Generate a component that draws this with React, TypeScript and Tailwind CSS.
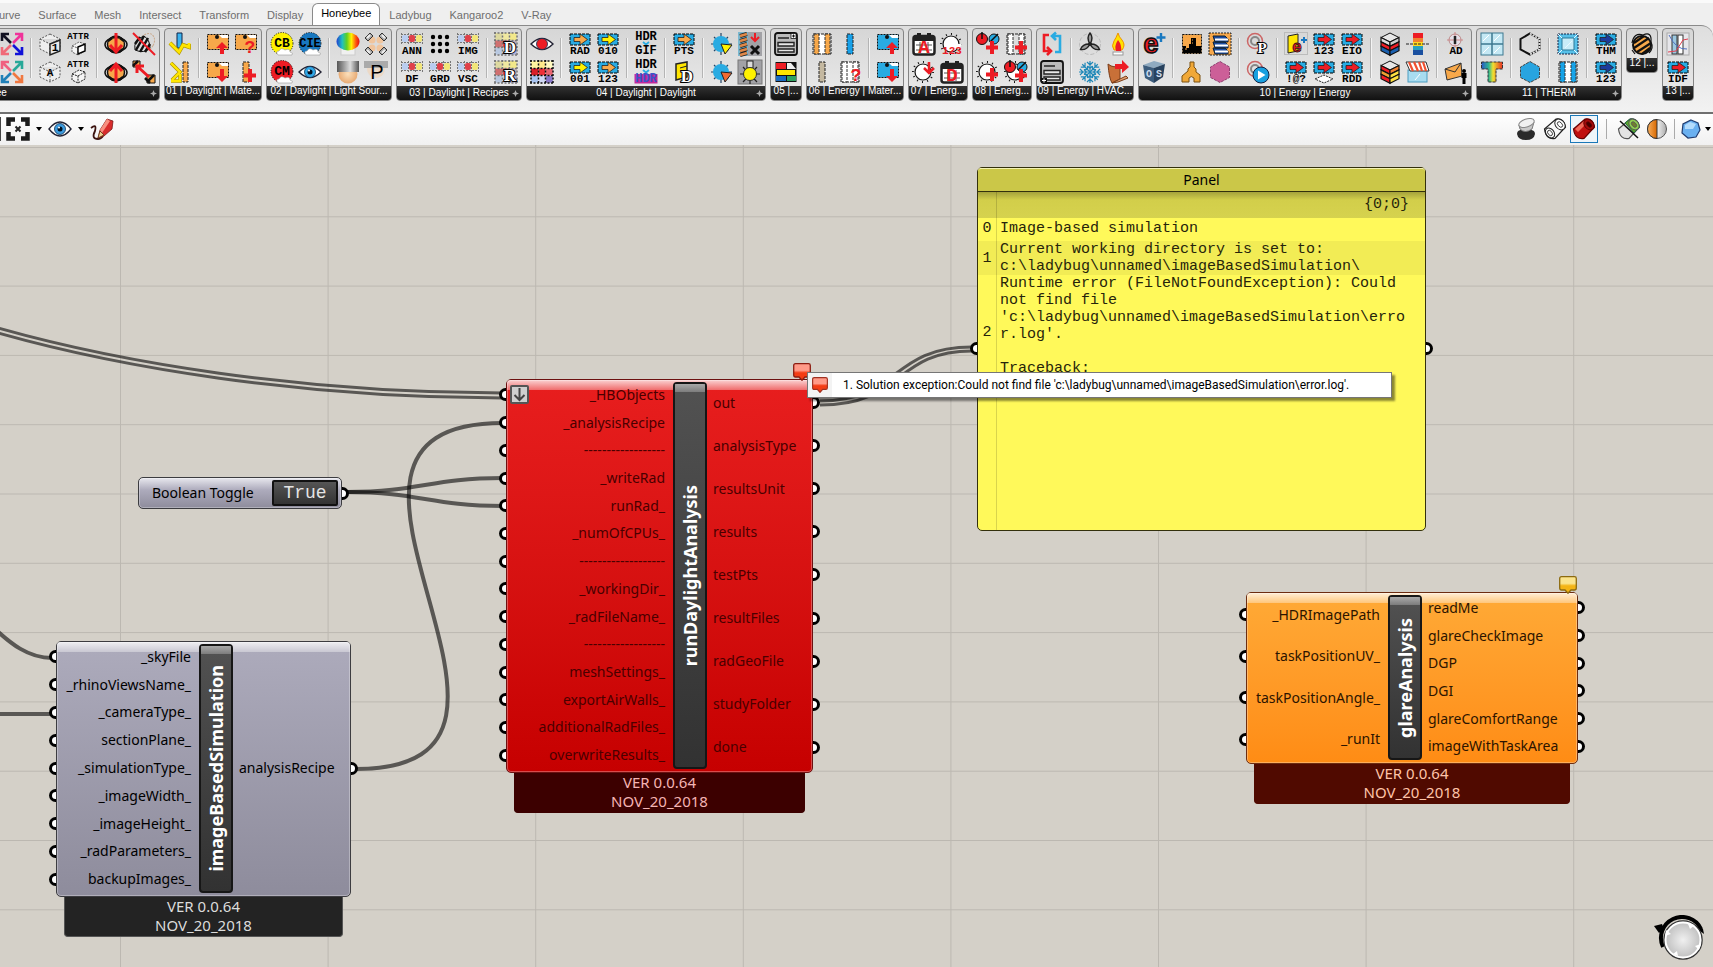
import type { ReactNode } from "react";

/* ---------- small drawing helpers for the ribbon icons ---------- */

function Svg({ children, box = "0 0 24 24", className = "w-6 h-6" }: { children: ReactNode; box?: string; className?: string }) {
  return (
    <svg viewBox={box} className={`${className} shrink-0 overflow-visible`} aria-hidden="true">
      {children}
    </svg>
  );
}

interface CapProps {
  children: ReactNode;
  x?: number;
  y?: number;
  size?: number;
  fill?: string;
}

function Cap({ children, x = 12, y = 22, size = 11, fill = "#000" }: CapProps) {
  return (
    <text x={x} y={y} fontSize={size} fill={fill} fontWeight="bold" textAnchor="middle" fontFamily="'Liberation Mono', monospace">
      {children}
    </text>
  );
}

const BLUE = "#29abe2";
const ORANGE = "#f7a84a";
const RED = "#ed1c24";

function Tag({ arrow, label }: { arrow: string; label?: string }) {
  return (
    <Svg>
      <rect x="2" y="2" width="20" height="11" fill={BLUE} stroke="#000" strokeWidth="1" strokeDasharray="3 1" />
      <path d="M6 5.500H12V2L19.500 7.500L12 13V9.500H6Z" fill={arrow} stroke="#222" strokeWidth="0.800" />
      {label ? <Cap>{label}</Cap> : <path d="M3 19L12 15L21 19L12 23Z" fill="#fff" stroke="#222" strokeDasharray="2 1" />}
    </Svg>
  );
}

function Folder({ fill, mark }: { fill: string; mark: "up" | "down" | "?" }) {
  return (
    <Svg>
      <rect x="1.500" y="2.500" width="21" height="15" fill={fill} stroke="#111" strokeDasharray="2 1" />
      <path d="M13 3H22V6H16Z" fill="#fff" />
      <circle cx="11" cy="5" r="2" fill="#111" />
      {mark === "up" && <path d="M16 10L22 16H18V22H14V16H10Z" fill={RED} />}
      {mark === "down" && <path d="M16 22L22 16H18V9H14V16H10Z" fill={RED} />}
      {mark === "?" && <Cap x={16} y={21} size={18} fill={RED}>?</Cap>}
    </Svg>
  );
}

const dotRow = ["#b9cdf0", "#e0404a", "#f2e678"];

function Grid3({ label }: { label: string }) {
  return (
    <Svg>
      {dotRow.map((c, i) => (
        <rect key={c} x={2 + i * 7} y="3" width="6" height="7" rx="2" fill={c} />
      ))}
      <path d="M1 2.500H23M1 10.500H23M1.500 1V12M8.500 1V12M15.500 1V12M22.500 1V12" stroke="#777" strokeDasharray="2 1" />
      <Cap>{label}</Cap>
    </Svg>
  );
}

function Mosaic({ letter }: { letter?: string }) {
  const colors = letter
    ? ["#ddd9a0", "#f0e8a0", "#f2e88a", "#d07070", "#e04848", "#c8b0b8", "#b8c8e0", "#ccd8ee", "#b0b0d8"]
    : ["#fff4a0", "#ffe98c", "#fff9c0", "#d81e28", "#f03038", "#e86470", "#a8c4f0", "#d0d8f4", "#8878c8"];
  return (
    <Svg>
      {colors.map((c, i) => (
        <rect key={i} x={1 + (i % 3) * 7.4} y={1 + Math.floor(i / 3) * 7.4} width="7" height="7" fill={c} />
      ))}
      <path
        d="M0 1H24M0 8.500H24M0 15.500H24M0 23H24M1 0V24M8.500 0V24M15.500 0V24M23 0V24"
        stroke={letter ? "#777" : "#111"}
        strokeWidth="1.500"
        strokeDasharray="2 1.500"
      />
      {letter && (
        <text x="16" y="21" fontSize="17" textAnchor="middle" fontFamily="'Liberation Serif', serif" fontWeight="bold" fill="#fff" stroke="#000" strokeWidth="2" paintOrder="stroke">
          {letter}
        </text>
      )}
    </Svg>
  );
}

function Plus({ x = 11, y = 11 }: { x?: number; y?: number }) {
  return <path d={`M${x + 4} ${y}h4v4.500h4v4h-4v4.500h-4v-4.500h-4v-4h4z`} fill={RED} />;
}

function Dial() {
  return (
    <>
      <circle cx="11" cy="12" r="10" fill="none" stroke="#111" strokeWidth="2" strokeDasharray="1 4.200" />
      <circle cx="11" cy="12" r="8" fill="#fff" stroke="#111" strokeWidth="1.200" />
    </>
  );
}

function DialIcon({ children }: { children?: ReactNode }) {
  return (
    <Svg>
      <Dial />
      {children}
    </Svg>
  );
}

function Calendar({ letter }: { letter: string }) {
  return (
    <Svg>
      <rect x="1.500" y="4" width="21" height="18.500" rx="2.500" fill="#fff" stroke="#222" strokeWidth="2.500" />
      <path d="M2 7H22M7 1V5M17 1V5" stroke="#222" strokeWidth="4" />
      <path d="M4 13H20M4 18H20M8 10V21M16 10V21" stroke="#555" />
      <Cap y={21} size={19} fill={RED}>{letter}</Cap>
    </Svg>
  );
}

function Knobs() {
  return (
    <>
      <circle cx="6" cy="7" r="5.500" fill={RED} stroke="#111" />
      <circle cx="18" cy="7" r="5" fill={BLUE} stroke="#111" />
      <path d="M6 0V7M14 10L22 2" stroke="#111" strokeWidth="1.500" />
    </>
  );
}

function Cross({ tl, tr, br, bl }: { tl: string; tr: string; br: string; bl: string }) {
  const arrow = "M11 11L3 3M2 9V2H9";
  return (
    <Svg>
      {[tl, tr, br, bl].map((c, i) => (
        <path key={i} d={arrow} fill="none" stroke={c} strokeWidth="2.600" transform={`rotate(${i * 90} 12 12)`} />
      ))}
    </Svg>
  );
}

function Cube({ letter }: { letter: string }) {
  return (
    <Svg>
      <path d="M12 2L22 7V17L12 22L2 17V7ZM2 7L12 12L22 7M12 12V22" fill="#eee" stroke="#555" strokeDasharray="2 1.500" />
      {letter === "1" && <path d="M12 12L22 8V19L12 23Z" fill="#e8e8e8" stroke="#222" strokeWidth="1.400" />}
      <Cap x={letter === "1" ? 17 : 12} y={letter === "1" ? 19 : 16}>{letter}</Cap>
    </Svg>
  );
}

function Attr({ dashed }: { dashed?: boolean }) {
  return (
    <Svg>
      <Cap y={7} size={9}>ATTR</Cap>
      <path
        d="M6 14L13 10L19 12V19L12 23L6 20ZM6 14L12 16V23M12 16L19 12"
        fill="#f4f4f4"
        stroke={dashed ? "#222" : "#666"}
        strokeDasharray="2 1"
      />
      {!dashed && <path d="M12 15L19 12V19L12 22Z" fill="#fff" stroke="#000" strokeWidth="1.400" />}
    </Svg>
  );
}

function Hive({ up }: { up?: boolean }) {
  return (
    <Svg>
      <circle cx="12" cy="12.500" r="8.500" fill={ORANGE} stroke="#111" strokeWidth="1.500" />
      <ellipse cx="12" cy="12.500" rx="11" ry="7" fill="none" stroke="#111" strokeWidth="1.500" />
      <path d="M4 9L8 6M5 17L9 20M20 9L16 6M19 17L15 20" stroke="#111" strokeWidth="2.500" />
      <path d={up ? "M12 23V5M6 11L12 4L18 11" : "M12 1V19M6 13L12 20L18 13"} fill="none" stroke={RED} strokeWidth="3" />
    </Svg>
  );
}

function Disc({ fill, text }: { fill: string; text: string }) {
  return (
    <Svg>
      <circle cx="12" cy="11.500" r="11" fill={fill} stroke="#111" strokeDasharray="1 1.500" />
      <Cap y={15} size={text.length > 2 ? 12 : 13}>{text}</Cap>
      <path d="M8 23Q5 19 9 19Q11 15 15 18Q20 16 20 20Q24 21 22 23Z" fill="#fff" stroke="#999" strokeWidth="0.600" />
    </Svg>
  );
}

function Eye({ iris, wide }: { iris: string; wide?: boolean }) {
  return (
    <Svg>
      <path d={wide ? "M1 12Q12 -2 23 12Q12 26 1 12Z" : "M1 12Q12 1 23 12Q12 23 1 12Z"} fill="#fff" stroke="#223" strokeWidth="1.400" />
      <circle cx="12" cy="12" r="5.500" fill={iris} stroke="#135" strokeWidth="0.800" />
      {iris !== RED && <circle cx="12" cy="12" r="2.500" fill="#012" />}
      {iris !== RED && <circle cx="11" cy="10.500" r="1" fill="#fff" />}
    </Svg>
  );
}

function Hdr({ alt }: { alt?: boolean }) {
  return (
    <Svg>
      <Cap y={8} size={12}>HDR</Cap>
      <path d="M9 10L12 12.500L15 10" fill="none" stroke={BLUE} strokeWidth="1.800" />
      {alt && <rect x="0.500" y="14" width="23" height="9.500" fill="#c0289c" />}
      <Cap y={22} size={12} fill={alt ? "#3a56c8" : "#000"}>{alt ? "HDR" : "GIF"}</Cap>
    </Svg>
  );
}

function Sensor({ fill }: { fill: string }) {
  return (
    <Svg>
      <path d="M11 1V23M1 12H22M4 5L18 19M18 5L4 19" stroke="#246" strokeWidth="1.200" />
      <circle cx="11" cy="12" r="8" fill={BLUE} />
      <path d="M11 12L22 13L15 22Z" fill={fill} stroke="#222" />
    </Svg>
  );
}

function List({ flip }: { flip?: boolean }) {
  return (
    <Svg>
      <rect x="1" y="1" width="22" height="22" rx="2.500" fill="#bbb" stroke="#111" strokeWidth="1.800" />
      <path d="M4 6H15M4 10.500H20V14H4ZM4 17H20V20H4Z" fill="#e8e8e8" stroke="#222" strokeWidth="1.400" />
      {flip ? (
        <>
          <rect x="1" y="18" width="6" height="5" fill="#111" />
          <path d="M4 18.500V22.500M2 20.500H6" stroke="#fff" />
        </>
      ) : (
        <>
          <rect x="17" y="1.500" width="5" height="5" fill="#fff" stroke="#111" strokeWidth="0.800" />
          <path d="M19.500 2.500V5.500M18 4H21" stroke="#111" />
        </>
      )}
    </Svg>
  );
}

function Wall({ fill, mid, mark }: { fill: string; mid: string; mark?: ReactNode }) {
  return (
    <Svg>
      <rect x="3" y="2" width="18" height="20" fill={mid} stroke="#222" strokeDasharray="3 1" />
      <path d="M4 2H9V22H4ZM15 2H20V22H15Z" fill={fill} stroke="#333" strokeDasharray="3 1" />
      {mark}
    </Svg>
  );
}

function Slab({ fill, mark }: { fill: string; mark?: ReactNode }) {
  return (
    <Svg>
      <rect x="9" y="2" width="6" height="20" fill={fill} stroke="#222" strokeDasharray="3 1" />
      {mark}
    </Svg>
  );
}

function Box({ tiers }: { tiers: [string, string][] }) {
  return (
    <Svg>
      <path d="M12 1L21 5.500L12 10L3 5.500Z" fill="#e8e8e8" stroke="#111" />
      {tiers.map(([left, right], i) => (
        <g key={i} stroke="#111" strokeWidth="1.200">
          <path d={`M3 ${5.5 + i * 4.4}L12 ${10 + i * 4.4}v4.400L3 ${9.9 + i * 4.4}Z`} fill={left} />
          <path d={`M21 ${5.5 + i * 4.4}L12 ${10 + i * 4.4}v4.400L21 ${9.9 + i * 4.4}Z`} fill={right} />
        </g>
      ))}
    </Svg>
  );
}

function Rings({ children }: { children: ReactNode }) {
  return (
    <Svg>
      <circle cx="9" cy="9" r="7.500" fill="none" stroke="#c66" strokeWidth="1.500" />
      <circle cx="9" cy="9" r="4" fill="none" stroke="#888" strokeWidth="2" />
      {children}
    </Svg>
  );
}

function Hexagon({ fill, stroke = "#444", width = 1 }: { fill: string; stroke?: string; width?: number }) {
  return (
    <Svg>
      <path d="M12 1.500L21.500 7V17.500L12 22.500L2.500 17.500V7Z" fill={fill} stroke={stroke} strokeWidth={width} strokeDasharray={width > 1 ? "none" : "3 1"} />
      {width > 1 && <path d="M12 1.500L21.500 7V17.500L12 22.500" fill="none" stroke="#ddd" strokeWidth="2" strokeDasharray="2 1" />}
    </Svg>
  );
}

/* ---------- ribbon data: section > column > [top, bottom] ---------- */

interface Group {
  label: string;
  cramped?: boolean;
  more?: boolean;
  sections: ReactNode[][][];
}

const groups: Group[] = [
  {
    label: "Honeybee",
    more: true,
    sections: [
      [[<Cross tl="#112" tr="#f0329a" br="#1010d8" bl="#f06a78" />, <Cross tl="#f06080" tr="#28a898" br="#f07840" bl="#2080b8" />]],
      [
        [<Cube letter="1" />, <Cube letter="A" />],
        [<Attr />, <Attr dashed />],
      ],
      [
        [<Hive />, <Hive up />],
        [
          <Svg>
            <ellipse cx="15" cy="10" rx="7" ry="9" fill="none" stroke="#c9a98c" strokeDasharray="2 1" transform="rotate(30 15 10)" />
            <path d="M3 18Q1 8 12 4Q18 8 18 16Q12 22 3 18Z" fill="#ddd" stroke="#111" />
            <path d="M4 18L12 4M8 20L16 6M13 20L18 12M3 12L8 5" stroke="#111" strokeWidth="2.500" />
            <path d="M1 1L23 23" stroke={RED} strokeWidth="2" />
          </Svg>,
          <Svg>
            <path d="M1 1H8V7H1ZM15 15H23V23H15Z" fill={ORANGE} stroke="#111" />
            <path d="M1 6L6 1M15 22L22 15M13 18L18 23" stroke="#111" strokeWidth="2.500" />
            <path d="M17 17L6 7M5 13V6H12" fill="none" stroke={RED} strokeWidth="3" />
          </Svg>,
        ],
      ],
    ],
  },
  {
    label: "01 | Daylight | Mate...",
    cramped: true,
    sections: [
      [
        [
          <Svg>
            <path d="M9 1H14V16H9Z" fill="#3cb4f0" stroke="#124" />
            <path d="M2 11L11 20L15 13L21 15V12" fill="none" stroke="#aa9000" strokeWidth="4" />
            <path d="M2 11L11 20L15 13L21 15V11" fill="none" stroke="#ffe600" strokeWidth="2.800" />
          </Svg>,
          <Svg>
            <path d="M15 2H20V22H15Z" fill={ORANGE} stroke="#222" strokeDasharray="3 1" />
            <path d="M3 3L12 12L4 20M3 21H12V14" fill="none" stroke="#aa9000" strokeWidth="3.600" />
            <path d="M3 3L12 12L4 20M3 21H12V14" fill="none" stroke="#ffe600" strokeWidth="2.400" />
          </Svg>,
        ],
      ],
      [
        [<Folder fill={ORANGE} mark="up" />, <Folder fill={ORANGE} mark="down" />],
        [<Folder fill={ORANGE} mark="?" />, <Slab fill={ORANGE} mark={<Plus x={10} y={9} />} />],
      ],
    ],
  },
  {
    label: "02 | Daylight | Light Sour...",
    cramped: true,
    sections: [
      [
        [<Disc fill="#fff200" text="CB" />, <Disc fill={RED} text="CM" />],
        [<Disc fill="#1878c0" text="CIE" />, <Eye iris="#30a8e8" />],
      ],
      [
        [
          <Svg>
            <defs>
              <linearGradient id="spectrum">
                <stop offset="0" stopColor="#2040d0" />
                <stop offset="0.250" stopColor="#20c0c0" />
                <stop offset="0.450" stopColor="#60d020" />
                <stop offset="0.650" stopColor="#fff000" />
                <stop offset="0.850" stopColor="#ff5010" />
                <stop offset="1" stopColor="#e01010" />
              </linearGradient>
            </defs>
            <rect x="5" y="15" width="14" height="8" fill="#f0f0f0" stroke="#ccc" />
            <ellipse cx="12" cy="9.500" rx="11.500" ry="9" fill="url(#spectrum)" />
          </Svg>,
          <Svg>
            <defs>
              <radialGradient id="globe">
                <stop offset="0" stopColor="#fbe0bc" />
                <stop offset="1" stopColor="#e8ab74" />
              </radialGradient>
              <linearGradient id="socket">
                <stop offset="0" stopColor="#555" />
                <stop offset="0.600" stopColor="#ddd" />
                <stop offset="1" stopColor="#555" />
              </linearGradient>
            </defs>
            <circle cx="12" cy="14" r="9.500" fill="url(#globe)" />
            <rect x="1" y="1" width="22" height="11" fill="url(#socket)" />
          </Svg>,
        ],
        [
          <Svg>
            {[0, 90, 180, 270].map((a) => (
              <g key={a} transform={`rotate(${a} 12 12)`}>
                <circle cx="8" cy="8" r="3.500" fill="#f0c49c" />
                <path d="M1 6L6 1L9 4L4 9Z" fill="#aaa" stroke="#333" />
                <path d="M3 6L6 3" stroke="#eee" strokeWidth="2" />
              </g>
            ))}
          </Svg>,
          <Svg>
            <circle cx="12" cy="9" r="9" fill="#ecd9c6" />
            <rect x="0" y="1" width="24" height="7" fill="#aaa" />
            <text x="13" y="19" fontSize="20" textAnchor="middle" fontFamily="'Liberation Sans', sans-serif">P</text>
          </Svg>,
        ],
      ],
    ],
  },
  {
    label: "03 | Daylight | Recipes",
    more: true,
    sections: [
      [
        [<Grid3 label="ANN" />, <Grid3 label="DF" />],
        [
          <Svg>
            {[0, 1, 2, 3, 4, 5, 6, 7, 8].map((i) => (
              <circle key={i} cx={5 + (i % 3) * 7} cy={5 + Math.floor(i / 3) * 7} r="2.200" />
            ))}
          </Svg>,
          <Grid3 label="GRD" />,
        ],
        [<Grid3 label="IMG" />, <Grid3 label="VSC" />],
      ],
      [[<Mosaic letter="D" />, <Mosaic letter="R" />]],
    ],
  },
  {
    label: "04 | Daylight | Daylight",
    more: true,
    sections: [
      [[<Eye iris={RED} />, <Mosaic />]],
      [
        [<Tag arrow={ORANGE} label="RAD" />, <Tag arrow="#fff200" label="001" />],
        [<Tag arrow="#fff200" label="010" />, <Tag arrow={ORANGE} label="123" />],
      ],
      [[<Hdr />, <Hdr alt />]],
      [
        [
          <Tag arrow={ORANGE} label="PTS" />,
          <Svg>
            <path d="M4 4L15 2V17L4 20Z" fill="#ffe600" stroke="#222" strokeWidth="1.500" />
            <path d="M8 8L15 6" stroke="#222" />
            <text x="15" y="22" fontSize="17" textAnchor="middle" fontFamily="'Liberation Serif', serif" fontWeight="bold" fill="#fff" stroke="#000" strokeWidth="2" paintOrder="stroke">D</text>
          </Svg>,
        ],
      ],
      [
        [<Sensor fill="#fff200" />, <Sensor fill="#f26a30" />],
        [
          <Svg>
            <rect width="24" height="24" fill="#a2a2a6" />
            <rect width="10" height="24" fill="#7ab8d0" />
            <path d="M2 4L9 2M2 9L9 7M2 14L9 12M2 19L9 17M2 23L9 21" stroke="#222" strokeWidth="4" />
            <path d="M2 4L9 2M2 9L9 7M2 14L9 12M2 19L9 17M2 23L9 21" stroke="#e08848" strokeWidth="2.400" />
            <path d="M17 1V9M13 5L17 9L21 5" fill="none" stroke={RED} strokeWidth="2" />
            <path d="M13 14L21 22M21 14L13 22" stroke="#111" strokeWidth="3" />
          </Svg>,
          <Svg>
            <rect width="24" height="24" fill="#a2a2a6" stroke="#777" />
            <path d="M12 4V24M2 14H22M5 7L19 22M19 7L5 22" stroke="#222" strokeWidth="1.200" />
            <rect x="9" y="1" width="6" height="7" fill="#ddd" stroke="#222" />
            <circle cx="12" cy="14" r="6.500" fill="#fff200" stroke="#333" />
          </Svg>,
        ],
      ],
    ],
  },
  {
    label: "05 |...",
    cramped: true,
    sections: [
      [
        [
          <List />,
          <Svg>
            <rect x="1.500" y="2" width="21" height="20" fill="#111" />
            <path d="M2 3H12V9H2Z" fill={RED} />
            <path d="M13 3H17L22 9H13Z" fill="#eee" />
            <rect x="3" y="10" width="18" height="5" fill="#ffe600" />
            <rect x="2" y="16" width="10" height="5" fill="#1a6ac0" />
            <rect x="13" y="16" width="9" height="5" fill="#2fa060" />
          </Svg>,
        ],
      ],
    ],
  },
  {
    label: "06 | Energy | Mater...",
    cramped: true,
    sections: [
      [
        [<Wall fill={ORANGE} mid="#fff" />, <Slab fill="#c4b8a0" />],
        [<Slab fill="#18a0e8" />, <Wall fill="#fff" mid="#fff" mark={<Cap x={18} y={21} size={18} fill={RED}>?</Cap>} />],
      ],
      [[<Folder fill={BLUE} mark="up" />, <Folder fill={BLUE} mark="down" />]],
    ],
  },
  {
    label: "07 | Energ...",
    cramped: true,
    sections: [
      [
        [
          <Calendar letter="A" />,
          <DialIcon>
            <path d="M17 2V12M12 8L17 13L22 8" fill="none" stroke={RED} strokeWidth="2.500" />
          </DialIcon>,
        ],
        [
          <DialIcon>
            <path d="M11 12H22L19 17H14Z" fill="#fff" />
            <Cap y={22} size={11} fill={RED}>123</Cap>
          </DialIcon>,
          <Calendar letter="D" />,
        ],
      ],
    ],
  },
  {
    label: "08 | Energ...",
    cramped: true,
    sections: [
      [
        [<Svg><Knobs /><Plus x={10} y={9} /></Svg>, <DialIcon><Plus x={10} y={8} /></DialIcon>],
        [<Wall fill="#fff" mid="#ddd" mark={<Plus x={11} y={9} />} />, <Svg><Dial /><Knobs /><Plus x={11} y={9} /></Svg>],
      ],
    ],
  },
  {
    label: "09 | Energy | HVAC...",
    cramped: true,
    sections: [
      [
        [
          <Svg>
            <path d="M9 3H4V19H9M7 15L11 19L7 23" fill="none" stroke={RED} strokeWidth="2.600" />
            <path d="M15 20H20V4H13M16 0.500L12 4L16 8" fill="none" stroke={BLUE} strokeWidth="2.600" />
          </Svg>,
          <List flip />,
        ],
      ],
      [
        [
          <Svg>
            <circle cx="12" cy="12" r="10.500" fill="none" stroke="#bbb" strokeDasharray="4 2" />
            {[0, 120, 240].map((a) => (
              <path key={a} d="M12 12Q8 6 12 1Q16 6 12 12Z" fill="#999" stroke="#222" strokeWidth="1.400" transform={`rotate(${a} 12 12)`} />
            ))}
            <circle cx="12" cy="12" r="2" fill="#222" />
          </Svg>,
          <Svg>
            {[0, 45, 90, 135, 180, 225, 270, 315].map((a) => (
              <path key={a} d="M12 12V1M9 2L12 5L15 2M9.500 6L12 8.500L14.500 6" fill="none" stroke="#2088b8" strokeWidth="1.200" transform={`rotate(${a} 12 12)`} />
            ))}
          </Svg>,
        ],
        [
          <Svg>
            <path d="M12 1Q10 6 8 9Q5 14 8 18H16Q20 13 16 8Q13 5 12 1Z" fill="#ffe200" stroke="#f09000" />
            <path d="M12 8Q8 14 10 19H15Q16 13 12 8Z" fill={RED} />
            <rect x="7" y="20" width="10" height="3" fill="#fff" stroke="#999" />
          </Svg>,
          <Svg>
            <path d="M2 4Q8 9 14 5V19L6 23Q3 18 2 4Z" fill="#c87038" stroke="#7a3c18" />
            <path d="M6 23L20 16L22 18L12 22Z" fill="#e0a070" stroke="#7a3c18" />
            <path d="M9 4H16V0L23 7L16 13V9H9Z" fill={RED} />
          </Svg>,
        ],
      ],
    ],
  },
  {
    label: "10 | Energy | Energy",
    more: true,
    sections: [
      [
        [
          <Svg>
            <text x="9" y="21" fontSize="27" textAnchor="middle" fontFamily="'Liberation Sans', sans-serif" fontWeight="bold" fill={RED} stroke="#111" strokeWidth="1.500">e</text>
            <path d="M19 1V10M14.500 5.500H23.500" stroke="#1878c0" strokeWidth="2.400" />
          </Svg>,
          <Svg>
            <path d="M1 5L12 1L23 4L12 8Z" fill="#8faac0" />
            <path d="M1 5L12 8V23L3 18Z" fill="#3c5c7c" />
            <path d="M23 4L12 8V23L21 17Z" fill="#28425e" />
            <Cap x={7} y={17} size={10} fill="#cde">O</Cap>
            <Cap x={17} y={17} size={10} fill="#cde">S</Cap>
          </Svg>,
        ],
      ],
      [
        [
          <Svg>
            <rect x="2.500" y="2.500" width="19" height="19" fill={ORANGE} stroke="#111" strokeDasharray="2 1" />
            <path d="M3 14H6V16H9V12H11V6H16V14H21V21H3Z" />
            <path d="M12 8H13M12 11H13M5 17H7" stroke={ORANGE} />
          </Svg>,
          <Svg>
            <path d="M2 22V16L8 11V9L10 7V2H14V7L16 9V12L20 15V22H14V18Q11 15 9 18V22Z" fill="#f0a838" stroke="#7a5010" />
          </Svg>,
        ],
        [
          <Svg>
            <rect x="1" y="1" width="22" height="22" fill={ORANGE} stroke="#222" strokeDasharray="2 1" />
            <path d="M5 4H17L20 7V10H7ZM5 10H17L20 13V16H7ZM5 16H17L20 19V22H7Z" fill="#1c4ca0" stroke="#123" />
            <path d="M7 7.500H20M7 13.500H20M7 19.500H20" stroke="#fff" strokeWidth="2" />
          </Svg>,
          <Hexagon fill="#cc5f98" stroke="#904070" />,
        ],
      ],
      [
        [
          <Rings>
            <text x="16" y="21" fontSize="15" textAnchor="middle" fontFamily="'Liberation Serif', serif" fontWeight="bold" fill="#fff" stroke="#000" strokeWidth="2" paintOrder="stroke">P</text>
          </Rings>,
          <Rings>
            <circle cx="15" cy="15" r="8" fill="#18a0e0" stroke="#124" />
            <path d="M12 10.500L19.500 15L12 19.500Z" fill="#fff" />
          </Rings>,
        ],
      ],
      [
        [
          <Svg>
            <rect x="0.500" y="0.500" width="23" height="22" fill="none" stroke="#bbb" />
            <path d="M4 4L14 2V19L4 21Z" fill="#ffe600" stroke="#222" />
            <text x="13" y="20" fontSize="17" textAnchor="middle" fontFamily="'Liberation Sans', sans-serif" fontWeight="bold" fill={RED} stroke="#311" strokeWidth="0.800">e</text>
            <path d="M20 5V11M17 8H23" stroke="#1878c0" strokeWidth="2" />
          </Svg>,
          <Tag arrow={RED} label="!@?" />,
        ],
        [<Tag arrow={RED} label="123" />, <Tag arrow={RED} />],
        [<Tag arrow={RED} label="EIO" />, <Tag arrow={RED} label="RDD" />],
      ],
      [
        [
          <Box tiers={[["#ddd", "#ccc"], [RED, RED], ["#1a60b0", "#1a60b0"]]} />,
          <Box tiers={[[RED, "#f08030"], ["#f0a030", "#ffe040"], [RED, "#ffe040"]]} />,
        ],
        [
          <Svg>
            <rect x="7" y="1" width="10" height="5" fill={RED} />
            <rect x="7" y="6" width="10" height="4" fill="#f08030" />
            <rect x="7" y="10" width="10" height="4" fill="#ffd820" />
            <rect x="7" y="14" width="10" height="4" fill="#28a0c0" />
            <rect x="7" y="18" width="10" height="5" fill="#1a50a0" />
            <path d="M0 12H24" stroke="#222" strokeDasharray="3 1" />
          </Svg>,
          <Svg>
            <rect x="2" y="10" width="19" height="12" fill="#a8dcf0" stroke="#4a9cc0" />
            <path d="M0 2H20L23 11H4Z" fill="#fff" stroke="#333" />
            <path d="M3 2L7 11M8 2L12 11M13 2L16 11M17 2L20 11" stroke="#f05030" strokeWidth="2.200" />
            <path d="M9 20L14 14" stroke="#fff" />
          </Svg>,
        ],
      ],
      [
        [
          <Svg>
            <circle cx="11" cy="8" r="6" fill="#e4e0e8" stroke="#b88" />
            <path d="M11 0V16M3 8H19" stroke="#c88" />
            <path d="M11 4V12" stroke="#222" strokeWidth="2.500" />
            <Cap>AD</Cap>
          </Svg>,
          <Svg>
            <path d="M1 9L17 3L18 16L3 20Z" fill={ORANGE} stroke="#333" />
            <path d="M1 9L11 12L17 3" fill="none" stroke="#333" />
            <circle cx="20" cy="11" r="2" />
            <path d="M17.500 13H22.500V18H21.500V24H18.500V18H17.500Z" />
          </Svg>,
        ],
      ],
    ],
  },
  {
    label: "11 | THERM",
    more: true,
    sections: [
      [
        [
          <Svg>
            <rect x="1" y="1" width="22" height="22" fill="#c4e8f4" stroke="#3c7890" />
            <path d="M12 1V23M1 12H23" stroke="#3c7890" strokeWidth="1.500" />
            <path d="M3 9L9 3M14 9L20 3M3 21L9 15M14 21L20 15" stroke="#fff" />
          </Svg>,
          <Svg>
            <defs>
              <linearGradient id="thermal">
                <stop offset="0" stopColor="#2858c8" />
                <stop offset="0.350" stopColor="#30b890" />
                <stop offset="0.550" stopColor="#f0e030" />
                <stop offset="1" stopColor="#e83020" />
              </linearGradient>
            </defs>
            <path d="M1.500 2H22.500V9H16V22H8V9H1.500Z" fill="url(#thermal)" stroke="#333" strokeDasharray="3 1" />
          </Svg>,
        ],
      ],
      [[<Hexagon fill="none" stroke="#111" width={2} />, <Hexagon fill="#28a4e0" />]],
      [
        [
          <Svg>
            <rect x="2" y="2" width="20" height="20" fill="#58c0e8" stroke="#124" strokeDasharray="2 1" />
            <rect x="6" y="6" width="12" height="12" fill="#c8ecf8" stroke="#2a7898" />
            <path d="M2 2L6 6M22 2L18 6M2 22L6 18M22 22L18 18M9 16L16 9" stroke="#e8f8ff" />
          </Svg>,
          <Wall fill="#18a4e8" mid="#fff" />,
        ],
      ],
      [[<Tag arrow="#1c3c9c" label="THM" />, <Tag arrow="#1c3c9c" label="123" />]],
    ],
  },
  {
    label: "12 |...",
    cramped: true,
    sections: [
      [
        [
          <Svg>
            <circle cx="12" cy="13" r="9" fill={ORANGE} stroke="#111" strokeWidth="2" />
            <path d="M4 11L14 4M4 16L19 6M7 20L21 11M12 22L20 16" stroke="#111" strokeWidth="2.200" />
            <path d="M2 11Q4 0 13 3Q22 -1 21 10Q24 16 19 21M2 18L5 22" fill="none" stroke="#111" strokeWidth="1.200" />
          </Svg>,
        ],
      ],
    ],
  },
  {
    label: "13 |...",
    cramped: true,
    sections: [
      [
        [
          <Svg>
            <rect x="1" y="1" width="22" height="22" fill="#e6e6ea" stroke="#aaa" />
            <rect x="6" y="3" width="5" height="19" fill="#9cc8e0" stroke="#333" />
            <rect x="12" y="3" width="5" height="19" fill="#fff" stroke="#333" />
            <path d="M3 3Q10 18 21 17" fill="none" stroke="#5070c0" />
            <path d="M2 20L10 19L17 8L22 7" fill="none" stroke="#e04050" />
          </Svg>,
          <Tag arrow={RED} label="IDF" />,
        ],
      ],
    ],
  },
];

function RibbonGroup({ group }: { group: Group }) {
  return (
    <section className="flex shrink-0 flex-col rounded border border-[#858585] bg-linear-to-b from-[#d6d6d6] to-[#ebebeb]">
      <div className="flex px-px pt-px">
        {group.sections.map((cols, s) => (
          <div key={s} className="flex">
            {s > 0 && <span className="mx-1 my-2 w-0.5 border-l border-[#b4b4b4] bg-[#f4f4f4]" />}
            {cols.map((col, c) => (
              <div key={c} className="flex flex-col">
                {col.map((icon, i) => (
                  <button key={i} type="button" className="flex size-7 items-center justify-center">
                    {icon}
                  </button>
                ))}
              </div>
            ))}
          </div>
        ))}
      </div>
      <div
        className={`relative flex h-[14px] w-0 min-w-full justify-center rounded-b-[3px] bg-linear-to-b from-[#333] to-[#111] text-[10px] whitespace-nowrap text-white ${
          group.cramped ? "leading-[9px]" : "leading-[14px]"
        }`}
      >
        {group.label === "Honeybee" ? <span className="-ml-[188px]">{group.label}</span> : <h2>{group.label}</h2>}
        {group.more && (
          <svg viewBox="0 0 7 7" className="absolute top-1 right-0.5 size-[7px]" aria-hidden="true">
            <path d="M3.500 0L4.500 2.500L7 3.500L4.500 4.500L3.500 7L2.500 4.500L0 3.500L2.500 2.500Z" fill="#aaa" />
          </svg>
        )}
      </div>
    </section>
  );
}

/* ---------- canvas toolbar ---------- */

function Caret() {
  return (
    <svg viewBox="0 0 6 4" className="h-1 w-1.5 shrink-0" aria-hidden="true">
      <path d="M0 0H6L3 4Z" />
    </svg>
  );
}

function Barrel({ kind }: { kind: "shadow" | "wire" | "red" | "green" }) {
  if (kind === "shadow") {
    return (
      <Svg>
        <path d="M3 17Q3 12 12 13Q21 12 21 17Q20 23 12 23Q4 23 3 17Z" fill="#2a2a2a" />
        <path d="M5 8L6 12Q11 17 18 12L20 5Z" fill="#c8c8c8" stroke="#777" />
        <ellipse cx="12.500" cy="6" rx="8" ry="4" fill="#f0f0f0" stroke="#888" transform="rotate(-18 12.500 6)" />
      </Svg>
    );
  }
  const side = { wire: "#fafafa", red: "#c01010", green: "#e4e4e4" }[kind];
  const edge = { wire: "#222", red: "#600", green: "#555" }[kind];
  return (
    <Svg>
      <path d="M1.500 12L13 2Q21 1 22.500 10L12 21.500Q3 23 1.500 12Z" fill={side} stroke={edge} strokeWidth="1.200" />
      {kind === "red" && <path d="M3 12L12 4L15 6L6 15Z" fill="#f06a5a" />}
      {kind === "green" && <path d="M8 6L13 2Q21 1 22.500 10L17 16Z" fill="#5aa828" stroke="#264" />}
      {kind === "wire" && <ellipse cx="7" cy="16" rx="4" ry="5.500" fill="none" stroke={edge} transform="rotate(-40 7 16)" />}
      {kind === "wire" && <ellipse cx="7" cy="16" rx="2" ry="3" fill="none" stroke={edge} strokeWidth="0.800" transform="rotate(-40 7 16)" />}
      <ellipse cx="17" cy="7.500" rx="4.500" ry="6" fill={kind === "red" ? "#a40c0c" : kind === "green" ? "#90d050" : "#fff"} stroke={edge} transform="rotate(-42 17 7.500)" />
      <ellipse cx="17" cy="7.500" rx="2" ry="3.200" fill={kind === "wire" ? "#fff" : "#400"} fillOpacity={kind === "green" ? 0.4 : 1} stroke={edge} strokeWidth="0.800" transform="rotate(-42 17 7.500)" />
      {kind === "green" && <path d="M3 4L21 21" stroke="#111" strokeWidth="1.500" />}
    </Svg>
  );
}

function CanvasToolbar() {
  const btn = "flex size-7 shrink-0 items-center justify-center";
  return (
    <div className="flex h-[31px] shrink-0 items-center justify-between bg-linear-to-b from-white to-[#f0f0f0] pb-0.5">
      <div className="flex items-center">
        <span className="h-6 w-px bg-[#444]" />
        <button type="button" aria-label="Zoom extents" className="ml-[3px] flex size-7 items-center justify-center">
          <Svg>
            <path d="M2.500 9V2.500H9M15 2.500H21.500V9M21.500 15V21.500H15M9 21.500H2.500V15" fill="none" stroke="#1c1c1c" strokeWidth="4.500" />
            <path d="M9.500 9.500L14.500 14.500M14.500 9.500L9.500 14.500" stroke="#222" strokeWidth="2" />
          </Svg>
        </button>
        <button type="button" aria-label="Zoom menu" className="ml-1"><Caret /></button>
        <button type="button" aria-label="Named views" className="ml-1 flex size-7 items-center justify-center">
          <Eye iris="#3c9ce0" wide />
        </button>
        <button type="button" aria-label="Views menu" className="ml-1"><Caret /></button>
        <button type="button" aria-label="Sketch" className="ml-1 flex size-7 items-center justify-center">
          <Svg>
            <path d="M1 11Q7 6 5 14Q1 22 8 22Q11 22 13 19" fill="none" stroke="#3c1410" strokeWidth="1.800" />
            <path d="M17 2L23 4L22 12L14 19L8 21L10 13Z" fill="#d82c2c" stroke="#7c1818" strokeWidth="0.800" />
            <path d="M17 2L20 4L12 16L10 13Z" fill="#f89080" />
            <path d="M8 21L10 14L14 18Z" fill="#f0d090" stroke="#5c3010" strokeWidth="0.800" />
          </Svg>
        </button>
      </div>
      <div className="flex items-center">
        <button type="button" aria-label="No preview" className={btn}><Barrel kind="shadow" /></button>
        <button type="button" aria-label="Wireframe preview" className={`ml-px ${btn}`}><Barrel kind="wire" /></button>
        <button type="button" aria-label="Shaded preview" className={`ml-px border border-[#1a78b8] bg-[#eef5fa] ${btn}`}><Barrel kind="red" /></button>
        <span className="mx-2 h-5 w-px bg-[#aaa]" />
        <button type="button" aria-label="Selected only" className={btn}><Barrel kind="green" /></button>
        <button type="button" aria-label="Document preview" className={btn}>
          <Svg>
            <defs>
              <linearGradient id="grayhalf">
                <stop offset="0.400" stopColor="#fff" />
                <stop offset="1" stopColor="#aaa" />
              </linearGradient>
              <linearGradient id="orangehalf">
                <stop offset="0" stopColor="#f8b060" />
                <stop offset="1" stopColor="#d86800" />
              </linearGradient>
            </defs>
            <circle cx="12" cy="12" r="9.500" fill="url(#grayhalf)" stroke="#555" />
            <path d="M12 2.500A9.500 9.500 0 0 0 12 21.500Z" fill="url(#orangehalf)" stroke="#333" />
          </Svg>
        </button>
        <span className="mr-0.5 ml-[3px] h-5 w-px bg-[#aaa]" />
        <button type="button" aria-label="Mesh quality" className={btn}>
          <Svg>
            <path d="M12 3L19 6L21 13L17 20L9 21L3 16L4 7Z" fill="#6ab0f0" stroke="#203c70" strokeWidth="1.200" />
            <path d="M11 5L17 7L14 12L6 12L6 8Z" fill="#b4dcfc" />
          </Svg>
        </button>
        <button type="button" aria-label="Mesh menu" className="mr-0.5"><Caret /></button>
      </div>
    </div>
  );
}

/* ---------- graph nodes ---------- */

type Tone = "gray" | "red" | "orange";

const bodyTone: Record<Tone, string> = {
  gray: "border-[#3c3c40] from-[#adabbc] to-[#8e8c9c] text-black",
  red: "border-[#6c1010] from-[#e81e1e] to-[#c60000] text-[#4a0000]",
  orange: "border-[#6c2c10] from-[#ffaa36] to-[#ff8c14] text-[#2c1400]",
};

const footTone: Record<Tone, string> = {
  gray: "bg-[#232323] border-[#555] text-[#dcdcdc]",
  red: "bg-[#3c0000] border-[#3c0000] text-[#f4b4b4]",
  orange: "bg-[#500a00] border-[#500a00] text-[#ffc4a8]",
};

interface NodeProps {
  name: string;
  tone: Tone;
  inputs: string[];
  outputs: string[];
  place: string;
  height: string;
  children?: ReactNode;
}

function GraphNode({ name, tone, inputs, outputs, place, height, children }: NodeProps) {
  return (
    <article className={`absolute flex flex-col items-stretch ${place}`}>
      <div
        className={`relative flex rounded-[5px] border bg-linear-to-b px-px pt-px pb-[3px] text-[14px] leading-5 shadow-[inset_0_0_0_1px_rgba(255,255,255,0.3)] ${height} ${bodyTone[tone]}`}
      >
        <div className="absolute inset-x-0 top-0 h-2.5 rounded-t-[3px] bg-linear-to-b from-white/80 to-white/35" />
        <ul className="relative flex flex-1 flex-col">
          {inputs.map((label, i) => (
            <li key={i} className="relative flex flex-1 items-center justify-end pr-2">
              <span className="absolute -left-[9px] h-[13px] w-[7px] rounded-l-full border-3 border-r-0 border-black bg-white" />
              {label}
            </li>
          ))}
        </ul>
        <div className="relative mt-px flex w-[34px] items-center justify-center rounded border-2 border-[#161616] bg-linear-to-b from-[#525252] to-[#323232]">
          <div className="absolute inset-x-0 top-0 h-2 bg-linear-to-b from-white/50 to-white/25" />
          <h3 className="relative rotate-180 text-[18px] leading-6 font-bold whitespace-nowrap text-white [writing-mode:vertical-rl]">{name}</h3>
        </div>
        <ul className={`relative flex flex-col ${tone === "gray" ? "w-[116px]" : tone === "red" ? "w-[104px]" : "w-[154px]"}`}>
          {outputs.map((label) => (
            <li key={label} className="relative flex flex-1 items-center pl-1.5">
              {label}
              <span className="absolute -right-[9px] h-[13px] w-[7px] rounded-r-full border-3 border-l-0 border-black bg-white" />
            </li>
          ))}
        </ul>
        {children}
      </div>
      <footer className={`mx-2 flex h-10 flex-col items-center rounded-b border border-t-0 text-[15px] leading-[19px] ${footTone[tone]}`}>
        <span>VER 0.0.64</span>
        <span>NOV_20_2018</span>
      </footer>
    </article>
  );
}

function Balloon({ id, from, to, edge, className }: { id: string; from: string; to: string; edge: string; className: string }) {
  return (
    <svg viewBox="0 0 18 18" className={className} aria-hidden="true">
      <defs>
        <linearGradient id={id} x1="0" y1="0" x2="0" y2="1">
          <stop offset="0" stopColor={from} />
          <stop offset="0.400" stopColor={from} />
          <stop offset="0.550" stopColor={to} />
        </linearGradient>
      </defs>
      <path d="M2.500 0.700H15.500Q17.300 0.700 17.300 2.500V12Q17.300 14 15.500 14H12L9 17.300L6 14H2.500Q0.700 14 0.700 12V2.500Q0.700 0.700 2.500 0.700Z" fill={`url(#${id})`} stroke={edge} strokeWidth="1.300" />
    </svg>
  );
}

const runInputs = [
  "_HBObjects",
  "_analysisRecipe",
  "------------------",
  "_writeRad",
  "runRad_",
  "_numOfCPUs_",
  "-------------------",
  "_workingDir_",
  "_radFileName_",
  "------------------",
  "meshSettings_",
  "exportAirWalls_",
  "additionalRadFiles_",
  "overwriteResults_",
];

const runOutputs = ["out", "analysisType", "resultsUnit", "results", "testPts", "resultFiles", "radGeoFile", "studyFolder", "done"];

const recipeInputs = [
  "_skyFile",
  "_rhinoViewsName_",
  "_cameraType_",
  "sectionPlane_",
  "_simulationType_",
  "_imageWidth_",
  "_imageHeight_",
  "_radParameters_",
  "backupImages_",
];

const panelRows = [
  { text: "Image-based simulation", row: "pt-0.5 pb-1" },
  { text: "Current working directory is set to:\nc:\\ladybug\\unnamed\\imageBasedSimulation\\", row: "bg-black/5" },
  {
    text: "Runtime error (FileNotFoundException): Could\nnot find file\n'c:\\ladybug\\unnamed\\imageBasedSimulation\\erro\nr.log'.\n\nTraceback:",
    row: "",
  },
];

function Panel() {
  return (
    <article className="absolute top-[22px] left-[977px] flex h-[364px] w-[449px] flex-col rounded-[5px] border border-[#33300c] bg-[#fff95a]">
      <span className="absolute top-[174px] -left-2 h-[13px] w-[7px] rounded-l-full border-3 border-r-0 border-black bg-white" />
      <span className="absolute top-[174px] -right-2 h-[13px] w-[7px] rounded-r-full border-3 border-l-0 border-black bg-white" />
      <h3 className="h-6 rounded-t-[3px] border-t border-b border-t-[#f4f2b0] border-b-[#33300c] bg-[#cbc748] text-center text-[14px] leading-[21px]">Panel</h3>
      <div className="relative flex flex-1 flex-col font-['Liberation_Mono',monospace] text-[15px] leading-[17px] text-[#26240a]">
        <div className="h-[26px] bg-linear-to-b from-[#a5a23c] via-[#d2ce4a] via-30% to-[#d6d24e] pt-1 pr-4 text-right">{"{0;0}"}</div>
        <ol>
          {panelRows.map((r, i) => (
            <li key={i} className={`flex items-center ${r.row}`}>
              <span className={`w-[18px] shrink-0 text-center ${i === 2 ? "pt-3" : ""}`}>{i}</span>
              <span className="pl-1 whitespace-pre">{r.text}</span>
            </li>
          ))}
        </ol>
        <span className="absolute inset-y-0 left-[18px] w-px bg-black/15" />
      </div>
    </article>
  );
}

function Wires() {
  return (
    <svg className="absolute inset-0 h-full w-full" fill="none" stroke="#000" strokeOpacity="0.580" strokeWidth="4" aria-hidden="true">
      <g strokeWidth="3">
        <path d="M-2 183C118 217 300 248 502 248" />
        <path d="M-2 188C118 222 300 253 502 253" />
        <path d="M820 256C900 256 890 202 972 202" />
        <path d="M820 260C904 260 894 206 972 206" />
      </g>
      <path d="M-6 483C10 498 28 513 52 513" />
      <path d="M0 569H52" />
      <path d="M356 624C597 624 258 278 503 278" />
      <path d="M347 347C420 347 430 333 503 333" />
      <path d="M347 347C420 347 430 361 503 361" />
    </svg>
  );
}

function Grid() {
  return (
    <svg className="absolute inset-0 h-full w-full" aria-hidden="true">
      <defs>
        <pattern id="grid" x="120" y="2" width="207.600" height="69.300" patternUnits="userSpaceOnUse">
          <path d="M0.500 0V70M0 0.500H208" fill="none" stroke="#bcb8b1" />
        </pattern>
      </defs>
      <rect width="100%" height="100%" fill="url(#grid)" />
    </svg>
  );
}

function Compass() {
  return (
    <svg viewBox="0 0 56 48" className="absolute right-1.5 bottom-1 h-12 w-14" aria-hidden="true">
      <defs>
        <radialGradient id="knob">
          <stop offset="0" stopColor="#f0f0f0" />
          <stop offset="1" stopColor="#bdbdbd" />
        </radialGradient>
      </defs>
      <path d="M12 32A21 21 0 0 1 50 14" fill="none" stroke="#000" strokeWidth="4" />
      <path d="M3 11L11 9L13 14L8 18Z" />
      <path d="M46 8L52 14L53 19L49 16Z" />
      <circle cx="32" cy="25" r="19" fill="url(#knob)" stroke="#333" strokeWidth="1.500" />
      <circle cx="32" cy="25" r="17.500" fill="none" stroke="#fff" strokeWidth="2" />
      <path d="M37 9L44 10L39 14ZM50 29L48 35L44 31ZM27 41L22 39L26 36ZM14 21L15 15L20 19Z" fill="#fff" />
    </svg>
  );
}

function Canvas() {
  return (
    <main className="relative min-h-[822px] flex-1 overflow-hidden bg-[#d4d0c8] font-['Noto_Sans','Open_Sans',sans-serif]">
      <Grid />
      <Wires />

      <div className="absolute top-[332px] left-[138px] flex h-8 w-[204px] items-center justify-between rounded-[5px] border border-[#3c3c40] bg-linear-to-b from-[#e8e8ee] via-[#adabbc] via-40% to-[#8e8c9c] pr-[3px] pl-[13px] text-[14px] text-black shadow-[inset_0_0_0_1px_rgba(255,255,255,0.3)]">
        <label htmlFor="toggle" className="pb-px">Boolean Toggle</label>
        <button
          id="toggle"
          type="button"
          className="h-[26px] w-[66px] rounded-xs border-2 border-[#111] bg-linear-to-b from-[#555] to-[#333] font-['Liberation_Mono',monospace] text-lg leading-5 text-[#e4e4e4]"
        >
          True
        </button>
        <span className="absolute -right-2 h-[13px] w-[7px] rounded-r-full border-3 border-l-0 border-black bg-white" />
      </div>

      <GraphNode
        name="imageBasedSimulation"
        tone="gray"
        inputs={recipeInputs}
        outputs={["analysisRecipe"]}
        place="top-[496px] left-[56px] w-[295px]"
        height="h-[256px]"
      />
      <GraphNode
        name="runDaylightAnalysis"
        tone="red"
        inputs={runInputs}
        outputs={runOutputs}
        place="top-[234px] left-[506px] w-[307px]"
        height="h-[394px]"
      >
        <button type="button" aria-label="Flatten" className="absolute top-[5px] left-[3px] size-[19px] rounded-xs border-2 border-[#555] bg-[#cfcfcf]">
          <svg viewBox="0 0 15 15" className="size-[15px]" aria-hidden="true">
            <path d="M7.500 1V13M2.500 8L7.500 13L12.500 8" fill="none" stroke="#444" strokeWidth="2" />
          </svg>
        </button>
      </GraphNode>
      <GraphNode
        name="glareAnalysis"
        tone="orange"
        inputs={["_HDRImagePath", "taskPositionUV_", "taskPositionAngle_", "_runIt"]}
        outputs={["readMe", "glareCheckImage", "DGP", "DGI", "glareComfortRange", "imageWithTaskArea"]}
        place="top-[447px] left-[1246px] w-[332px]"
        height="h-[172px]"
      />
      <Panel />

      <Balloon id="warn" from="#fbe48c" to="#f4b414" edge="#8c6a10" className="absolute top-[431px] left-[1559px] size-[18px]" />
      <Balloon id="err" from="#ff9a88" to="#f43c14" edge="#8c1c10" className="absolute top-[218px] left-[793px] size-[18px]" />

      <div role="tooltip" className="absolute top-[227px] left-[807px] flex h-[26px] w-[585px] items-center border border-[#767676] bg-white font-[Roboto,sans-serif] text-[12px] text-black shadow-[3px_3px_2px_rgba(0,0,0,0.45)]">
        <span className="flex h-full w-6 items-center justify-center bg-[#f3f3f3]">
          <Balloon id="err-tip" from="#ff9a88" to="#f43c14" edge="#a03020" className="size-4" />
        </span>
        <span className="pl-[11px] whitespace-nowrap">
          1. Solution exception:Could not find file 'c:\ladybug\unnamed\imageBasedSimulation\error.log'.
        </span>
      </div>

      <Compass />
    </main>
  );
}

const tabs = ["Curve", "Surface", "Mesh", "Intersect", "Transform", "Display", "Honeybee", "Ladybug", "Kangaroo2", "V-Ray"];

export default function App() {
  return (
    <div className="flex min-h-screen flex-col overflow-hidden bg-[#efefef] font-['Liberation_Sans',Arial,sans-serif]">
      <nav className="-mb-px flex h-[26px] items-end border-t-3 border-[#fafafa] text-[11px] text-[#6e6e6e]">
        {tabs.map((tab) => (
          <button
            key={tab}
            type="button"
            className={
              tab === "Honeybee"
                ? "h-[23px] rounded-t-md border border-b-0 border-[#8a8a8a] bg-white px-2 pb-1 text-black"
                : `h-5 px-[9px] pb-0.5 ${tab === "Curve" ? "-ml-[18px]" : ""}`
            }
          >
            {tab}
          </button>
        ))}
      </nav>
      <header className="flex h-[89px] shrink-0 items-start rounded-tr-xl border-t border-b-2 border-t-[#8a8a8a] border-b-[#707070] bg-linear-to-b from-[#dedede] to-[#f2f2f2] pt-0.5">
        <div className="-ml-1 flex items-start gap-1">
          {groups.map((g) => (
            <RibbonGroup key={g.label} group={g} />
          ))}
        </div>
      </header>
      <CanvasToolbar />
      <Canvas />
    </div>
  );
}
